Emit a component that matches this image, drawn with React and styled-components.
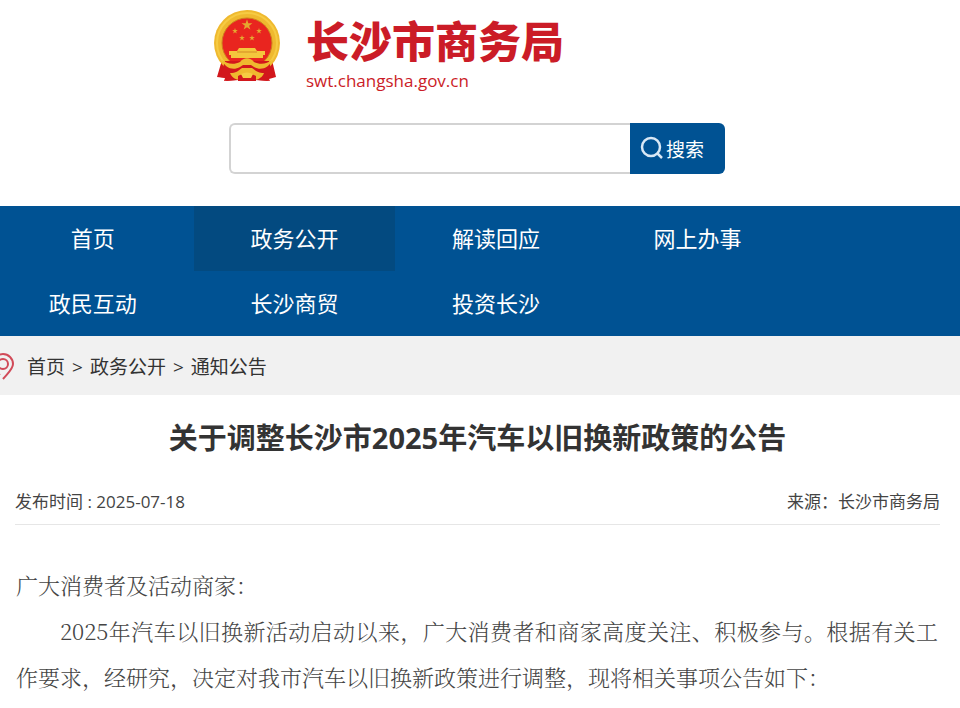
import React, { useState } from "react";
import styled, { createGlobalStyle } from "styled-components";

const GlobalStyle = createGlobalStyle`
  * {
    box-sizing: border-box;
  }
  body {
    margin: 0;
    background: #fff;
    color: #333;
    font-family: "Open Sans", "Noto Sans CJK SC", sans-serif;
    overflow-x: hidden;
  }
  a {
    color: inherit;
    text-decoration: none;
  }
`;

const Header = styled.header`
  max-width: 534px;
  margin: 0 auto;
  padding: 10px 0 32px;
`;

const Brand = styled.a`
  display: flex;
  align-items: flex-start;
  gap: 25px;
`;

const BrandText = styled.div`
  display: flex;
  flex-direction: column;
  padding-top: 3px;
  color: #cb1c27;
`;

const BrandName = styled.span`
  font-size: 43px;
  line-height: 58px;
  font-weight: 900;
`;

const BrandUrl = styled.span`
  font-size: 17px;
  line-height: 20px;
`;

const SearchForm = styled.form`
  display: flex;
  margin: 32px 22px 0 16px;
`;

const SearchInput = styled.input`
  flex: 1;
  min-width: 0;
  height: 51px;
  padding: 0 12px;
  border: 2px solid #d3d3d3;
  border-right: 0;
  border-radius: 6px 0 0 6px;
  font: inherit;
  font-size: 19px;
  outline: none;
`;

const SearchButton = styled.button`
  display: flex;
  align-items: center;
  gap: 2px;
  width: 95px;
  height: 51px;
  padding: 0 0 0 10px;
  border: 0;
  border-radius: 0 6px 6px 0;
  background: #005293;
  color: #fff;
  font: inherit;
  font-size: 19px;
  cursor: pointer;
`;

const Nav = styled.nav`
  background: #005293;
`;

const NavList = styled.ul`
  display: grid;
  grid-template-columns: repeat(4, 21%);
  width: 100%;
  margin: 0 0 0 -8px;
  padding: 0;
  list-style: none;
`;

const NavLink = styled.a`
  display: block;
  line-height: 65px;
  font-size: 22px;
  text-align: center;
  color: #fff;
  background: ${(props) => (props.$active ? "#034a80" : "transparent")};
`;

const Breadcrumb = styled.nav`
  display: flex;
  align-items: center;
  gap: 7px;
  height: 59px;
  padding-top: 2px;
  background: #f1f1f1;
  font-size: 19px;
  line-height: 28px;

  svg {
    margin: 0 6px 0 -8px;
  }
`;

const Article = styled.main`
  padding: 21px 20px 16px 15px;
`;

const Title = styled.h1`
  margin: 0;
  font-size: 29px;
  line-height: 44px;
  font-weight: 700;
  text-align: center;
`;

const Meta = styled.div`
  display: flex;
  justify-content: space-between;
  margin-top: 24px;
  padding: 6px 0 10px;
  border-bottom: 1px solid #e6e6e6;
  color: #444;
  font-size: 17px;
  line-height: 24px;
`;

const Content = styled.div`
  padding: 37px 2px 0 1px;
  color: #444;
  font-family: "Noto Serif CJK SC", "Liberation Serif", "Noto Sans CJK SC", serif;
  font-weight: 300;
  font-size: 22px;
  line-height: 46px;
  text-align: justify;
`;

const Paragraph = styled.p`
  margin: 0;
  text-indent: ${(props) => (props.$indent ? "2em" : "0")};
`;

const NAV_ITEMS = [
  "首页",
  "政务公开",
  "解读回应",
  "网上办事",
  "政民互动",
  "长沙商贸",
  "投资长沙",
];

const STAR =
  "M0-10 2.3-3.1 9.5-3.1 3.7 1.2 5.9 8.1 0 3.8-5.9 8.1-3.7 1.2-9.5-3.1-2.3-3.1Z";

function Emblem() {
  return (
    <svg width="68" height="72" viewBox="0 0 68 72" aria-hidden="true">
      <path d="M9 50h50l4 17-7 2 1 2-12-1H23l-12 1 1-3-8-1Z" fill="#d2171c" />
      <circle cx="34" cy="33" r="33" fill="#efb92f" />
      <circle cx="34" cy="33" r="30" fill="none" stroke="#f6cb43" strokeWidth="2" />
      <circle cx="34" cy="33" r="25" fill="#e9251f" stroke="#cf801f" />
      <g fill="#e5a82f">
        <path d={STAR} transform="translate(34 15) scale(.57)" />
        <path d={STAR} transform="translate(22 21) scale(.3)" />
        <path d={STAR} transform="translate(46 21) scale(.3)" />
        <path d={STAR} transform="translate(29 28) scale(.3)" />
        <path d={STAR} transform="translate(39 28) scale(.3)" />
      </g>
      <path d="M26 38h16l2 3h8v4h-2v3H18v-3h-2v-4h8Z" fill="#f4c63d" />
      <path d="M24 42h20" stroke="#d38b24" />
      <path d="M12 51h44l4 16-6 1 1 3-13-1H26l-13 1 1-3-7-1Z" fill="#d2171c" />
      <path d="M9 50c5 4 12 5 18 2 4-5 10-5 14 0 6 3 13 2 18-2-3 8-11 11-18 7l-3-2h-8l-3 2c-7 4-15 1-18-7Z" fill="#efb92f" />
      <path d="M17 63c6 0 8-2 12-5h10c4 3 6 5 12 5-2 6-9 8-17 8s-15-2-17-8Z" fill="#efb92f" />
      <path d="M25 66c5-3 13-3 18 0v5H25Z" fill="#d2171c" />
      <path d="M28 64c4-2 8-2 12 0l-2 4h-8Z" fill="#f6cb43" />
    </svg>
  );
}

function SearchIcon() {
  return (
    <svg width="24" height="26" viewBox="0 0 24 26" fill="none" stroke="#d9e8f5" strokeWidth="2.5" aria-hidden="true">
      <circle cx="11" cy="11" r="9" />
      <path d="M17 17l5 5" />
    </svg>
  );
}

function PinIcon() {
  return (
    <svg width="22" height="28" viewBox="0 0 22 28" fill="none" stroke="#d14a58" strokeWidth="2" aria-hidden="true">
      <path d="M11 26c5-6 10-10 10-15a10 10 0 0 0-20 0c0 4 3 8 7 11" />
      <circle cx="11" cy="11" r="5" />
    </svg>
  );
}

function App() {
  const [keyword, setKeyword] = useState("");

  function handleSubmit(e) {
    e.preventDefault();
  }

  return (
    <>
      <GlobalStyle />
      <Header>
        <Brand href="#">
          <Emblem />
          <BrandText>
            <BrandName>长沙市商务局</BrandName>
            <BrandUrl>swt.changsha.gov.cn</BrandUrl>
          </BrandText>
        </Brand>
        <SearchForm role="search" onSubmit={handleSubmit}>
          <SearchInput
            type="text"
            aria-label="搜索"
            value={keyword}
            onChange={(e) => setKeyword(e.target.value)}
          />
          <SearchButton type="submit">
            <SearchIcon />
            搜索
          </SearchButton>
        </SearchForm>
      </Header>

      <Nav>
        <NavList>
          {NAV_ITEMS.map((item) => (
            <li key={item}>
              <NavLink href="#" $active={item === "政务公开"}>
                {item}
              </NavLink>
            </li>
          ))}
        </NavList>
      </Nav>

      <Breadcrumb>
        <PinIcon />
        <a href="#">首页</a>
        <span>&gt;</span>
        <a href="#">政务公开</a>
        <span>&gt;</span>
        <a href="#">通知公告</a>
      </Breadcrumb>

      <Article>
        <Title>关于调整长沙市2025年汽车以旧换新政策的公告</Title>
        <Meta>
          <span>发布时间 : 2025-07-18</span>
          <span>来源：长沙市商务局</span>
        </Meta>
        <Content lang="zh-CN">
          <Paragraph>广大消费者及活动商家：</Paragraph>
          <Paragraph $indent>
            2025年汽车以旧换新活动启动以来，广大消费者和商家高度关注、积极参与。根据有关工作要求，经研究，决定对我市汽车以旧换新政策进行调整，现将相关事项公告如下：
          </Paragraph>
        </Content>
      </Article>
    </>
  );
}

export default App;
